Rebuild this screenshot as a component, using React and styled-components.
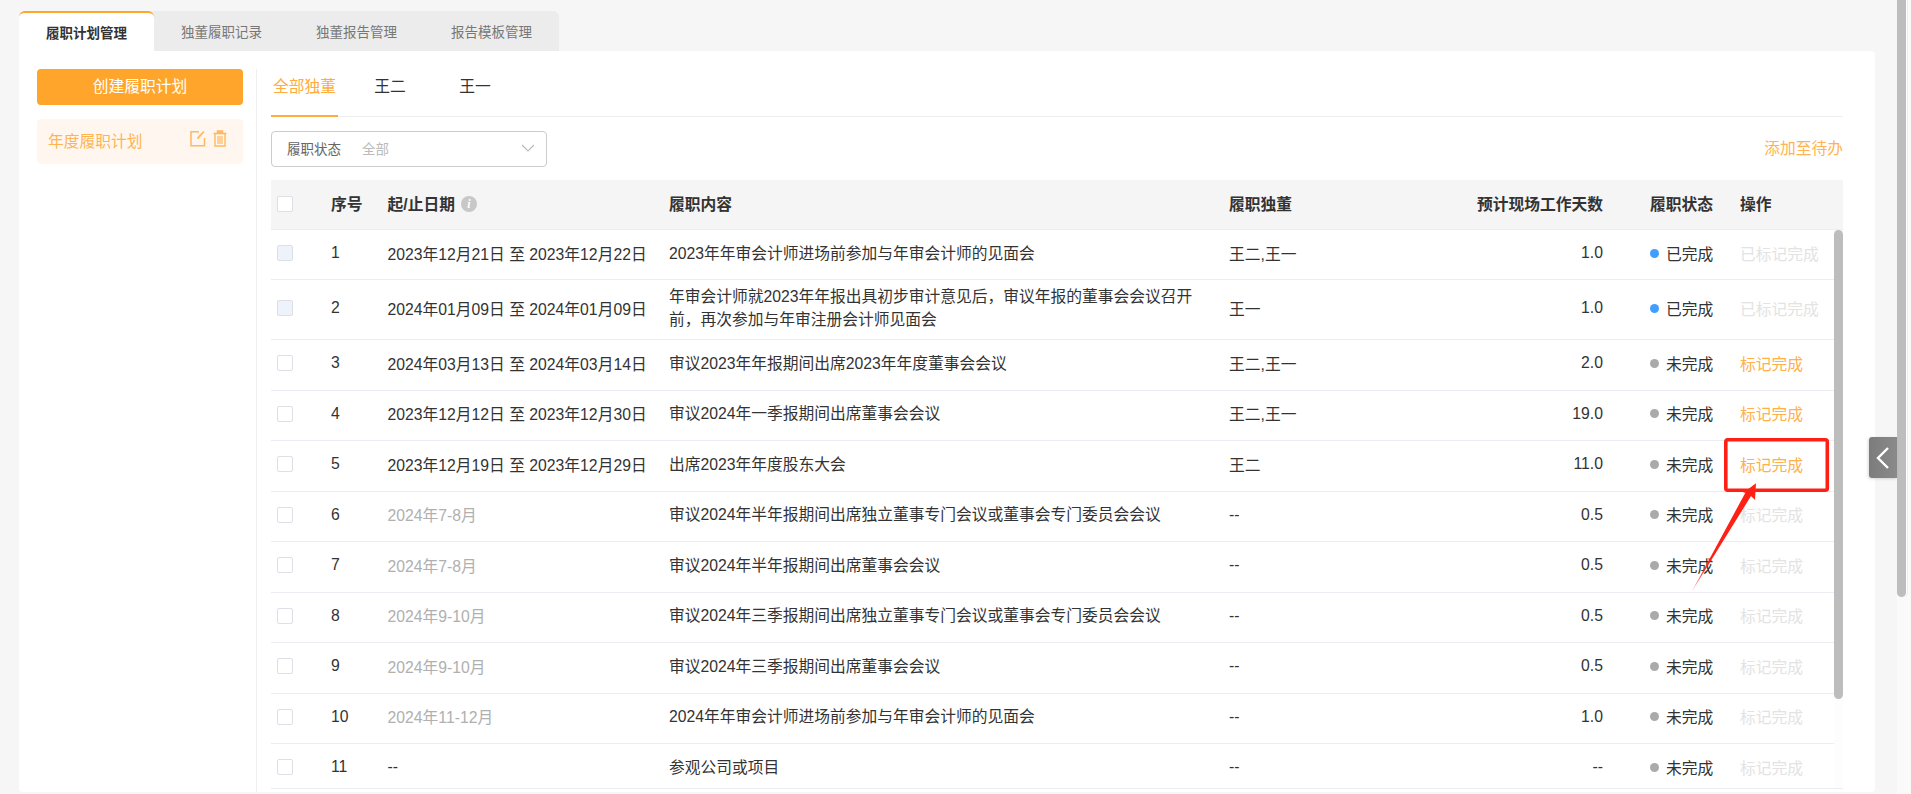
import React from "react";
import styled, { createGlobalStyle } from "styled-components";

const Global = createGlobalStyle`
  html, body { margin: 0; padding: 0; height: 100%; overflow: hidden; }
  body {
    font-family: "Liberation Sans", "Noto Sans CJK SC", sans-serif;
    font-size: 15.75px;
    color: #333;
    background: #f6f6f6;
  }
  * { box-sizing: border-box; }
`;

const COLS = "60px 56.5px 281.5px 560px 174px 200px 137px 1fr";

const Page = styled.div`
  position: relative;
  height: 794px;
  overflow: hidden;
  background: #f6f6f6;
  padding: 11px 36px 0 19px;
`;
const PageTrack = styled.div`
  position: absolute;
  left: 1897px;
  top: 0;
  bottom: 0;
  width: 14px;
  background: #fafafa;
`;
const PageThumb = styled.div`
  width: 9px;
  height: 597px;
  background: #bdbdbd;
  border-radius: 0 0 5px 5px;
  box-shadow: 1px 0 0 #fff, 2px 0 0 #eee;
`;
const TopTabs = styled.div`
  display: flex;
  width: 540px;
  height: 40px;
  background: #ececec;
  border-radius: 6px 6px 0 0;
`;
const TopTab = styled.div`
  width: 135px;
  display: flex;
  align-items: center;
  justify-content: center;
  font-size: 13.5px;
  color: ${p => (p.$active ? "#333" : "#777")};
  font-weight: ${p => (p.$active ? 700 : 400)};
  background: ${p => (p.$active ? "#fff" : "transparent")};
  border-top: ${p => (p.$active ? "2px solid #ffa52b" : "none")};
  border-radius: 6px 6px 0 0;
`;
const Card = styled.div`
  display: flex;
  height: 741px;
  background: #fff;
  border-radius: 0 4px 4px 4px;
  padding: 18px 32px 3px 18px;
`;
const Side = styled.aside`
  flex: 0 0 220px;
  padding-right: 13px;
  border-right: 1px solid #eee;
  margin-bottom: -3px;
`;
const CreateBtn = styled.div`
  height: 36px;
  border-radius: 4px;
  background: #ffa52b;
  color: #fff;
  display: flex;
  align-items: center;
  justify-content: center;
  padding-bottom: 3px;
`;
const PlanItem = styled.div`
  margin-top: 14px;
  height: 45px;
  border-radius: 4px;
  background: #fff7ef;
  color: #ffb454;
  display: flex;
  align-items: center;
  padding: 0 16px 2px 11px;
`;
const PlanName = styled.span`
  flex: 1;
`;
const PlanIcons = styled.span`
  display: flex;
  gap: 7px;
  align-items: center;
  margin-top: -4px;
`;
const Main = styled.main`
  flex: 1;
  min-width: 0;
  padding-left: 14px;
  display: flex;
  flex-direction: column;
`;
const SubTabs = styled.div`
  display: flex;
  height: 47.5px;
  border-bottom: 1px solid #eee;
`;
const SubTab = styled.div`
  width: ${p => p.$w}px;
  margin-right: ${p => p.$mr || 0}px;
  height: 47.5px;
  padding-top: 6px;
  line-height: 24px;
  text-align: center;
  color: ${p => (p.$active ? "#ffab40" : "#333")};
  border-bottom: ${p => (p.$active ? "2px solid #ffab40" : "none")};
`;
const Toolbar = styled.div`
  display: flex;
  justify-content: space-between;
  align-items: center;
  height: 36px;
  margin: 14.5px 0 13px;
`;
const Select = styled.div`
  width: 275.5px;
  height: 36px;
  border: 1px solid #ccc;
  border-radius: 4px;
  display: flex;
  align-items: center;
  padding: 0 11px 2px 15px;
  font-size: 13.5px;
  color: #666;
`;
const SelectValue = styled.span`
  flex: 1;
  margin-left: 21px;
  color: #bbb;
`;
const LinkText = styled.a`
  color: #ffb350;
  margin-bottom: 3px;
`;
const Table = styled.div`
  position: relative;
  flex: 1;
  min-height: 0;
  display: flex;
  flex-direction: column;
  border-bottom: 1px solid #ebedf3;
`;
const HeadRow = styled.div`
  display: grid;
  grid-template-columns: ${COLS};
  align-items: center;
  flex: 0 0 50px;
  padding-bottom: 2px;
  background: #f5f5f5;
  border-bottom: 1px solid #ebedf3;
  font-weight: 700;
`;
const Body = styled.div`
  flex: 1;
  min-height: 0;
  overflow: hidden;
`;
const BodyTrack = styled.div`
  position: absolute;
  top: 50px;
  bottom: 0;
  right: 0;
  width: 9px;
  background: #fdfdfd;
`;
const BodyThumb = styled.div`
  height: 469px;
  background: #bdbdbd;
  border-radius: 5px;
`;
const Row = styled.div`
  display: grid;
  grid-template-columns: ${COLS};
  align-items: center;
  height: ${p => p.$h}px;
  padding-bottom: 3px;
  border-bottom: 1px solid #ebedf3;
`;
const CheckCell = styled.div`
  padding-left: 6px;
  display: flex;
`;
const Check = styled.span`
  width: 16px;
  height: 16px;
  border: 1px solid #dcdfe6;
  border-radius: 2px;
  background: ${p => (p.$done ? "#edf2fb" : "#fff")};
`;
const DateCell = styled.div`
  color: ${p => (p.$muted ? "#b0b0b0" : "#333")};
  white-space: nowrap;
`;
const HeadDate = styled.div`
  display: flex;
  align-items: center;
  gap: 6px;
`;
const Info = styled.span`
  width: 16px;
  height: 16px;
  border-radius: 50%;
  background: #c8c8c8;
  color: #fff;
  font: italic 700 12px/16px "Liberation Serif", serif;
  text-align: center;
`;
const Content = styled.div`
  padding-right: 8px;
  line-height: 23px;
`;
const Num = styled.div`
  text-align: right;
`;
const StatusCell = styled.div`
  padding-left: 47px;
  display: flex;
  align-items: center;
  white-space: nowrap;
`;
const Dot = styled.span`
  width: 9px;
  height: 9px;
  border-radius: 50%;
  margin-right: 7px;
  background: ${p => (p.$done ? "#409eff" : "#aaa")};
`;
const Action = styled.div`
  color: ${p => (p.$on ? "#ffb04a" : "#e3e3e3")};
  white-space: nowrap;
`;
const Toggle = styled.div`
  position: absolute;
  left: 1869px;
  top: 437px;
  width: 28px;
  height: 41px;
  background: linear-gradient(90deg, #7c7c7c, #8a8a8a);
  border-radius: 3px 0 0 3px;
  box-shadow: -1px 1px 3px rgba(0, 0, 0, 0.15);
  display: flex;
  align-items: center;
  justify-content: center;
`;
const Annotation = styled.svg`
  position: absolute;
  left: 1680px;
  top: 430px;
  pointer-events: none;
`;
const SelectChevron = () => (
  <svg width="14" height="8" viewBox="0 0 14 8" fill="none" stroke="#bbb" strokeWidth="1.2">
    <path d="M1 1l6 6 6-6" />
  </svg>
);
const EditIcon = () => (
  <svg width="16" height="17" viewBox="0 0 16 17" fill="none" stroke="#ffb860" strokeWidth="1.5">
    <path d="M9 1.7H1v14h13.5V8" />
    <path d="M13.8 1.5 7.5 8.6" strokeWidth="1.8" />
  </svg>
);
const TrashIcon = () => (
  <svg width="14" height="17" viewBox="0 0 14 17" fill="none" stroke="#ffb860" strokeWidth="1.4">
    <path d="M0.5 3.5h13" strokeWidth="1.6" />
    <path d="M4.5 3V1h5v2" fill="#ffb860" />
    <path d="M2 3.5v12.5h10V3.5" />
    <path d="M5 6v8M7 6v8M9 6v8" strokeWidth="1.2" />
  </svg>
);

const rows = [
  { d: "2023年12月21日 至 2023年12月22日", c: "2023年年审会计师进场前参加与年审会计师的见面会", p: "王二,王一", n: "1.0", done: true, h: 50 },
  { d: "2024年01月09日 至 2024年01月09日", c: "年审会计师就2023年年报出具初步审计意见后，审议年报的董事会会议召开前，再次参加与年审注册会计师见面会", p: "王一", n: "1.0", done: true, h: 60 },
  { d: "2024年03月13日 至 2024年03月14日", c: "审议2023年年报期间出席2023年年度董事会会议", p: "王二,王一", n: "2.0", on: true },
  { d: "2023年12月12日 至 2023年12月30日", c: "审议2024年一季报期间出席董事会会议", p: "王二,王一", n: "19.0", on: true },
  { d: "2023年12月19日 至 2023年12月29日", c: "出席2023年年度股东大会", p: "王二", n: "11.0", on: true },
  { d: "2024年7-8月", muted: true, c: "审议2024年半年报期间出席独立董事专门会议或董事会专门委员会会议", p: "--", n: "0.5" },
  { d: "2024年7-8月", muted: true, c: "审议2024年半年报期间出席董事会会议", p: "--", n: "0.5" },
  { d: "2024年9-10月", muted: true, c: "审议2024年三季报期间出席独立董事专门会议或董事会专门委员会会议", p: "--", n: "0.5" },
  { d: "2024年9-10月", muted: true, c: "审议2024年三季报期间出席董事会会议", p: "--", n: "0.5" },
  { d: "2024年11-12月", muted: true, c: "2024年年审会计师进场前参加与年审会计师的见面会", p: "--", n: "1.0" },
  { d: "--", c: "参观公司或项目", p: "--", n: "--" },
];

export default function App() {
  return (
    <>
      <Global />
      <Page>
        <TopTabs>
          <TopTab $active>履职计划管理</TopTab>
          <TopTab>独董履职记录</TopTab>
          <TopTab>独董报告管理</TopTab>
          <TopTab>报告模板管理</TopTab>
        </TopTabs>
        <Card>
          <Side>
            <CreateBtn>创建履职计划</CreateBtn>
            <PlanItem>
              <PlanName>年度履职计划</PlanName>
              <PlanIcons>
                <EditIcon />
                <TrashIcon />
              </PlanIcons>
            </PlanItem>
          </Side>
          <Main>
            <SubTabs>
              <SubTab $active $w={67} $mr={9.5}>全部独董</SubTab>
              <SubTab $w={85}>王二</SubTab>
              <SubTab $w={85}>王一</SubTab>
            </SubTabs>
            <Toolbar>
              <Select>
                履职状态
                <SelectValue>全部</SelectValue>
                <SelectChevron />
              </Select>
              <LinkText>添加至待办</LinkText>
            </Toolbar>
            <Table>
              <HeadRow>
                <CheckCell><Check /></CheckCell>
                <div>序号</div>
                <HeadDate>起/止日期<Info>i</Info></HeadDate>
                <div>履职内容</div>
                <div>履职独董</div>
                <Num>预计现场工作天数</Num>
                <StatusCell>履职状态</StatusCell>
                <div>操作</div>
              </HeadRow>
              <Body>
                {rows.map((r, i) => (
                  <Row key={i} $h={r.h || 50.5}>
                    <CheckCell><Check $done={r.done} /></CheckCell>
                    <div>{i + 1}</div>
                    <DateCell $muted={r.muted}>{r.d}</DateCell>
                    <Content>{r.c}</Content>
                    <div>{r.p}</div>
                    <Num>{r.n}</Num>
                    <StatusCell>
                      <Dot $done={r.done} />
                      {r.done ? "已完成" : "未完成"}
                    </StatusCell>
                    <Action $on={r.on}>{r.done ? "已标记完成" : "标记完成"}</Action>
                  </Row>
                ))}
              </Body>
              <BodyTrack><BodyThumb /></BodyTrack>
            </Table>
          </Main>
        </Card>
        <PageTrack><PageThumb /></PageTrack>
        <Toggle>
          <svg width="14" height="24" viewBox="0 0 14 24" fill="none" stroke="#fff" strokeWidth="2.4">
            <path d="M12 2 2 12l10 10" />
          </svg>
        </Toggle>
        <Annotation width="160" height="170" viewBox="0 0 160 170">
          <defs>
            <linearGradient id="arrowFade" x1="1" y1="0" x2="0" y2="1">
              <stop offset="0.75" stopColor="#ff2015" />
              <stop offset="1" stopColor="#ff2015" stopOpacity="0.45" />
            </linearGradient>
          </defs>
          <rect x="45.8" y="9.8" width="101.5" height="50.5" rx="2" fill="none" stroke="#ff2015" strokeWidth="3.6" />
          <polygon points="76,53.3 75,70 71,66 11.7,161.7 65.5,62.5 63,63" fill="url(#arrowFade)" />
        </Annotation>
      </Page>
    </>
  );
}
